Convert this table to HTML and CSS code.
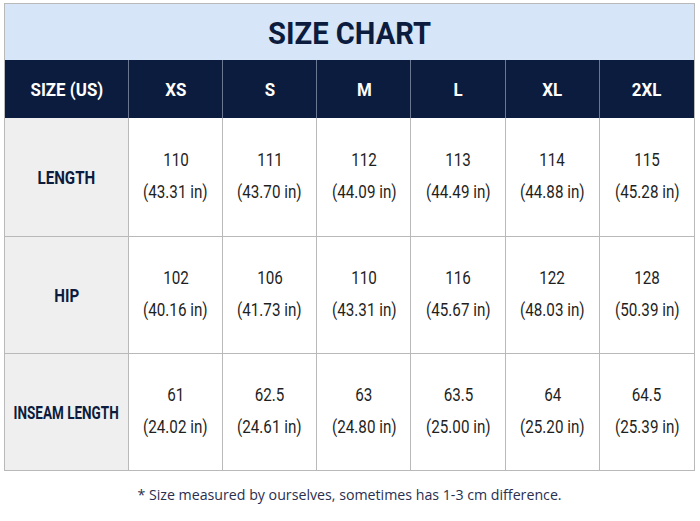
FILE: index.html
```html
<!DOCTYPE html>
<html>
<head>
<meta charset="utf-8">
<link rel="stylesheet" href="styles.css">
</head>
<body>
<div class="chart">
  <div class="title"><span class="sq">SIZE CHART</span></div>
  <div class="grid">
    <div class="hd"><span class="sq">SIZE (US)</span></div>
    <div class="hd"><span class="sq">XS</span></div>
    <div class="hd"><span class="sq">S</span></div>
    <div class="hd"><span class="sq">M</span></div>
    <div class="hd"><span class="sq">L</span></div>
    <div class="hd"><span class="sq">XL</span></div>
    <div class="hd last"><span class="sq">2XL</span></div>

    <div class="lbl"><span class="sq">LENGTH</span></div>
    <div class="cell"><span class="sq">110</span><span class="sq">(43.31 in)</span></div>
    <div class="cell"><span class="sq">111</span><span class="sq">(43.70 in)</span></div>
    <div class="cell"><span class="sq">112</span><span class="sq">(44.09 in)</span></div>
    <div class="cell"><span class="sq">113</span><span class="sq">(44.49 in)</span></div>
    <div class="cell"><span class="sq">114</span><span class="sq">(44.88 in)</span></div>
    <div class="cell"><span class="sq">115</span><span class="sq">(45.28 in)</span></div>

    <div class="lbl"><span class="sq">HIP</span></div>
    <div class="cell"><span class="sq">102</span><span class="sq">(40.16 in)</span></div>
    <div class="cell"><span class="sq">106</span><span class="sq">(41.73 in)</span></div>
    <div class="cell"><span class="sq">110</span><span class="sq">(43.31 in)</span></div>
    <div class="cell"><span class="sq">116</span><span class="sq">(45.67 in)</span></div>
    <div class="cell"><span class="sq">122</span><span class="sq">(48.03 in)</span></div>
    <div class="cell"><span class="sq">128</span><span class="sq">(50.39 in)</span></div>

    <div class="lbl lbl-long"><span class="sq">INSEAM LENGTH</span></div>
    <div class="cell"><span class="sq">61</span><span class="sq">(24.02 in)</span></div>
    <div class="cell"><span class="sq">62.5</span><span class="sq">(24.61 in)</span></div>
    <div class="cell"><span class="sq">63</span><span class="sq">(24.80 in)</span></div>
    <div class="cell"><span class="sq">63.5</span><span class="sq">(25.00 in)</span></div>
    <div class="cell"><span class="sq">64</span><span class="sq">(25.20 in)</span></div>
    <div class="cell"><span class="sq">64.5</span><span class="sq">(25.39 in)</span></div>
  </div>
</div>
<p class="note">* Size measured by ourselves, sometimes has 1-3 cm difference.</p>
</body>
</html>
```
FILE: styles.css
```css
html, body {
  margin: 0;
  padding: 0;
  background: #ffffff;
}
body {
  padding: 3px 5px 0 4px;
  width: 700px;
  height: 521px;
  box-sizing: border-box;
}
.chart {
  border: 1px solid #b9b9b9;
}
.title, .hd, .lbl, .cell {
  font-family: Roboto, sans-serif;
}
.sq {
  display: inline-block;
  white-space: nowrap;
  transform: scaleX(0.84);
}
.title {
  height: 56px;
  background: #d6e5f7;
  color: #0c1c3e;
  font-weight: bold;
  font-size: 32px;
  display: flex;
  align-items: center;
  justify-content: center;
  padding-top: 2px;
  box-sizing: border-box;
}
.title .sq { transform: scaleX(0.91); }
.grid {
  display: grid;
  grid-template-columns: 124px repeat(6, 1fr);
  grid-template-rows: 58px 119px 117px 116px;
}
.hd {
  background: #0c1c3e;
  color: #ffffff;
  font-weight: bold;
  font-size: 19px;
  display: flex;
  align-items: center;
  justify-content: center;
  border-right: 1px solid #6b7790;
}
.hd .sq { transform: scaleX(0.89); }
.hd.last { border-right: none; }
.lbl {
  background: #efefef;
  color: #0c1c3e;
  font-weight: bold;
  font-size: 18px;
  display: flex;
  align-items: center;
  justify-content: center;
  border-right: 1px solid #b9b9b9;
  border-bottom: 1px solid #b9b9b9;
}
.lbl-long { font-size: 18px; }
.lbl-long .sq { transform: scaleX(0.75); }
.cell {
  display: flex;
  flex-direction: column;
  align-items: center;
  justify-content: center;
  gap: 9px;
  color: #1f1f1f;
  font-size: 19px;
  border-right: 1px solid #b9b9b9;
  border-bottom: 1px solid #b9b9b9;
  padding-bottom: 4px;
}
.cell .sq { transform: scaleX(0.80); }
.cell:nth-child(7n) { border-right: none; }
.grid > :nth-last-child(-n+7) { border-bottom: none; }
.note {
  margin: 14px 0 0;
  text-align: center;
  color: #2a2f4f;
  font-family: "Open Sans", sans-serif;
  font-size: 14.2px;
}
```
